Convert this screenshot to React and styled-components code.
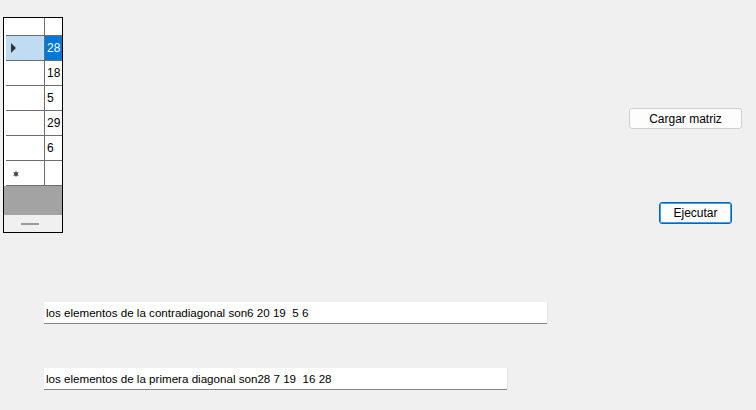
import React from "react";
import styled, { createGlobalStyle } from "styled-components";

const GlobalStyle = createGlobalStyle`
  html, body {
    margin: 0;
    padding: 0;
    background: #f0f0f0;
  }
  body {
    font-family: "Liberation Sans", Arial, sans-serif;
    font-size: 12px;
    color: #000;
  }
`;

const Form = styled.div`
  width: 756px;
  height: 410px;
  background: #f0f0f0;
  display: flex;
  flex-direction: column;
  overflow: hidden;
`;

const TopRow = styled.div`
  display: flex;
  align-items: flex-start;
  padding: 17px 0 0 3px;
`;

const Grid = styled.div`
  width: 58px;
  height: 214px;
  border: 1px solid #000;
  background: #a3a3a3;
  display: flex;
  flex-direction: column;
`;

const Row = styled.div`
  display: flex;
  height: ${(p) => p.$h}px;
  background: #fff;
`;

const RowHeader = styled.div`
  width: 39px;
  margin-left: 2px;
  border-right: 1px solid #6e6e6e;
  border-bottom: 1px solid #6e6e6e;
  background: ${(p) => (p.$selected ? "#bfdcf2" : "#fff")};
  display: flex;
  align-items: center;
  padding-left: ${(p) => (p.$selected ? 5 : 7)}px;
  box-sizing: border-box;
`;

const Cell = styled.div`
  width: 17px;
  border-bottom: 1px solid #6e6e6e;
  background: ${(p) => (p.$selected ? "#0078d7" : "#fff")};
  color: ${(p) => (p.$selected ? "#fff" : "#000")};
  padding-left: 2px;
  box-sizing: border-box;
  display: flex;
  align-items: center;
  line-height: 1;
`;

const Arrow = styled.span`
  width: 0;
  height: 0;
  border-left: 5px solid #333;
  border-top: 5px solid transparent;
  border-bottom: 5px solid transparent;
`;

const Backdrop = styled.div`
  flex: 1;
  background: #a3a3a3;
`;

const ScrollBar = styled.div`
  height: 17px;
  background: #f0f0f0;
  display: flex;
  align-items: center;
  padding-left: 17px;
`;

const Thumb = styled.span`
  width: 18px;
  height: 2px;
  background: #9a9a9a;
`;

const ButtonColumn = styled.div`
  margin-left: 566px;
  padding-top: 91px;
  display: flex;
  flex-direction: column;
  align-items: flex-start;
  gap: 73px;
`;

const Button = styled.button`
  font-family: "Liberation Sans", Arial, sans-serif;
  font-size: 12px;
  color: #000;
  width: ${(p) => p.$w}px;
  height: ${(p) => p.$h}px;
  margin-left: ${(p) => p.$indent || 0}px;
  background: #fdfdfd;
  border: 1px solid ${(p) => (p.$default ? "#0067c0" : "#d0d0d0")};
  box-shadow: ${(p) => (p.$default ? "inset 0 0 0 1px #4a9ce0" : "none")};
  border-radius: 3px;
  padding: 0;
  line-height: 1;
`;

const OutputBox = styled.div`
  width: ${(p) => p.$w}px;
  height: 22px;
  margin-left: 44px;
  margin-top: ${(p) => p.$top}px;
  background: #fff;
  border-bottom: 1px solid #868686;
  box-shadow: 1px 0 0 #e4e4e4;
  box-sizing: border-box;
  padding-left: 2px;
  display: flex;
  align-items: center;
  white-space: pre;
  font-size: 11.6px;
`;

const Star = () => (
  <svg width="6" height="6" viewBox="0 0 6 6" style={{ marginTop: 2 }}>
    <circle cx="3" cy="3" r="2.2" fill="#6a6a6a" />
    <path d="M3 0.3V5.7M0.6 1.6L5.4 4.4M5.4 1.6L0.6 4.4" stroke="#444" strokeWidth="0.9" />
  </svg>
);

const values = [28, 18, 5, 29, 6];

export default function App() {
  return (
    <Form>
      <GlobalStyle />
      <TopRow>
        <Grid>
          <Row $h={18}>
            <RowHeader />
            <Cell />
          </Row>
          {values.map((v, i) => (
            <Row key={i} $h={25}>
              <RowHeader $selected={i === 0}>{i === 0 && <Arrow />}</RowHeader>
              <Cell $selected={i === 0}>{v}</Cell>
            </Row>
          ))}
          <Row $h={25}>
            <RowHeader>
              <Star />
            </RowHeader>
            <Cell />
          </Row>
          <Backdrop />
          <ScrollBar>
            <Thumb />
          </ScrollBar>
        </Grid>
        <ButtonColumn>
          <Button $w={113} $h={21}>Cargar matriz</Button>
          <Button $w={73} $h={22} $indent={30} $default>
            Ejecutar
          </Button>
        </ButtonColumn>
      </TopRow>
      <OutputBox $w={503} $top={69}>
        los elementos de la contradiagonal son6 20 19  5 6
      </OutputBox>
      <OutputBox $w={463} $top={44}>
        los elementos de la primera diagonal son28 7 19  16 28
      </OutputBox>
    </Form>
  );
}
